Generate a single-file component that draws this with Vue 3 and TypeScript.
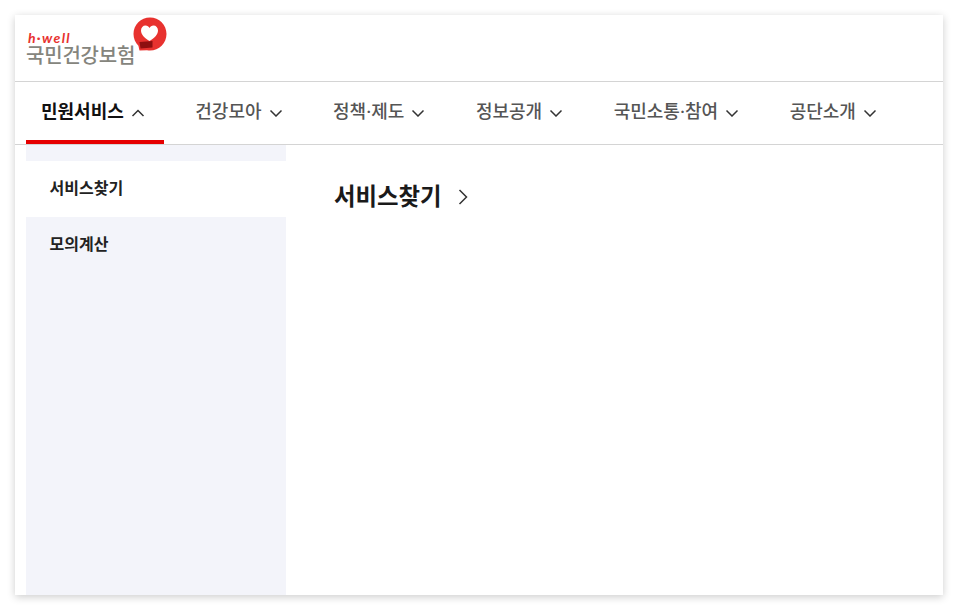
<script setup lang="ts">
const menus = [
  { label: '민원서비스', active: true },
  { label: '건강모아', active: false },
  { label: '정책·제도', active: false },
  { label: '정보공개', active: false },
  { label: '국민소통·참여', active: false },
  { label: '공단소개', active: false }
]

const subMenus = [
  { label: '서비스찾기', active: true },
  { label: '모의계산', active: false }
]
</script>

<template>
  <div class="page">
    <div class="card">
      <header class="header">
        <a class="logo">
          <span class="logo-text">
            <span class="logo-sub">h·well</span>
            <span class="logo-name">국민건강보험</span>
          </span>
          <svg class="logo-mark" width="34" height="34" viewBox="0 0 34 34">
            <path
              d="M17 .5C7.900.5.500 7.900.500 17c0 4.600 1.900 8.700 4.900 11.700L6.500 33.500 14 33.200c1 .2 2 .3 3 .3 9.100 0 16.500-7.400 16.500-16.500S26.100.5 17 .5Z"
              fill="#e8322f"
            />
            <path
              d="M16.500 24C11 21 8 17 8 13.500 8 10.500 10 8.500 12.500 8.500c1.800 0 3.300 1 4 2.500.7-1.500 2.200-2.500 4-2.500 2.500 0 4.500 2 4.500 5 0 3.500-3 7.500-8.500 10.500Z"
              fill="#fff"
            />
            <path d="M6.500 25 19.500 24V30.500L7.500 31.500Z" fill="#8e0f10" />
          </svg>
        </a>
      </header>

      <nav class="gnb">
        <a v-for="menu in menus" :key="menu.label" class="gnb-item" :class="{ active: menu.active }">
          <span class="gnb-label">{{ menu.label }}</span>
          <svg class="chevron" width="14" height="8" viewBox="0 0 14 8">
            <path v-if="menu.active" d="M1.500 7 7 1.500 12.500 7" />
            <path v-else d="M1.500 1.500 7 7 12.500 1.500" />
          </svg>
        </a>
      </nav>

      <div class="body">
        <aside class="side">
          <a v-for="item in subMenus" :key="item.label" class="side-item" :class="{ active: item.active }">
            {{ item.label }}
          </a>
        </aside>
        <main class="content">
          <h2 class="title">
            <span>서비스찾기</span>
            <svg width="11" height="16" viewBox="0 0 11 16">
              <path d="M1.500 1 8.500 8 1.500 15" />
            </svg>
          </h2>
        </main>
      </div>
    </div>
  </div>
</template>

<style>
html,
body {
  margin: 0;
  background: #fff;
}
</style>

<style scoped>
.page {
  box-sizing: border-box;
  width: 958px;
  height: 610px;
  padding: 15px;
  font-family: Roboto, 'Noto Sans CJK KR', sans-serif;
}

.card {
  display: flex;
  flex-direction: column;
  height: 580px;
  background: #fff;
  box-shadow: 0 2px 8px rgba(0, 0, 0, 0.2);
}

.header {
  box-sizing: border-box;
  height: 67px;
  padding: 2px 0 0 11px;
  border-bottom: 1px solid #d4d4d4;
}

.logo {
  display: flex;
  align-items: flex-start;
}

.logo-text {
  display: flex;
  flex-direction: column;
  padding-top: 14px;
}

.logo-sub {
  height: 14px;
  margin-left: 2px;
  font-family: Lato, sans-serif;
  font-size: 14px;
  font-style: italic;
  font-weight: 700;
  line-height: 14px;
  letter-spacing: 1.300px;
  color: #e8322f;
}

.logo-name {
  margin-top: 1px;
  font-family: 'Liberation Sans', 'Noto Sans CJK KR', sans-serif;
  font-size: 20px;
  font-weight: 500;
  line-height: 21px;
  letter-spacing: -0.2px;
  color: #85857d;
  white-space: nowrap;
}

.logo-mark {
  margin-left: -2px;
}

.gnb {
  box-sizing: border-box;
  display: flex;
  gap: 16px;
  height: 63px;
  padding-left: 11px;
  border-bottom: 1px solid #d4d4d4;
}

.gnb-item {
  box-sizing: border-box;
  display: flex;
  align-items: center;
  gap: 7px;
  height: 62px;
  padding: 0 19.500px 4px 15px;
  font-size: 18px;
  font-weight: 500;
  color: #555;
  white-space: nowrap;
}

.gnb-label {
  margin-top: -2px;
}

.gnb-item.active {
  border-bottom: 4px solid #e60000;
  padding-bottom: 0;
  color: #111;
  font-weight: 700;
}

.chevron {
  flex: none;
  margin-top: 3px;
}

.chevron path,
.title path {
  fill: none;
  stroke: #333;
  stroke-width: 1.500;
}

.body {
  flex: 1;
  display: flex;
  min-height: 0;
  padding-left: 11px;
}

.side {
  flex: none;
  width: 260px;
  padding-top: 16px;
  background: #f3f4fa;
}

.side-item {
  box-sizing: border-box;
  display: block;
  height: 56px;
  padding-left: 23.500px;
  font-size: 16px;
  font-weight: 700;
  line-height: 55px;
  color: #222;
}

.side-item.active {
  background: #fff;
}

.content {
  flex: 1;
  padding: 30px 48px;
}

.title {
  display: flex;
  align-items: center;
  gap: 16px;
  margin: 0;
  font-size: 23.400px;
  font-weight: 700;
  line-height: 44px;
  color: #1a1a1a;
}
</style>
